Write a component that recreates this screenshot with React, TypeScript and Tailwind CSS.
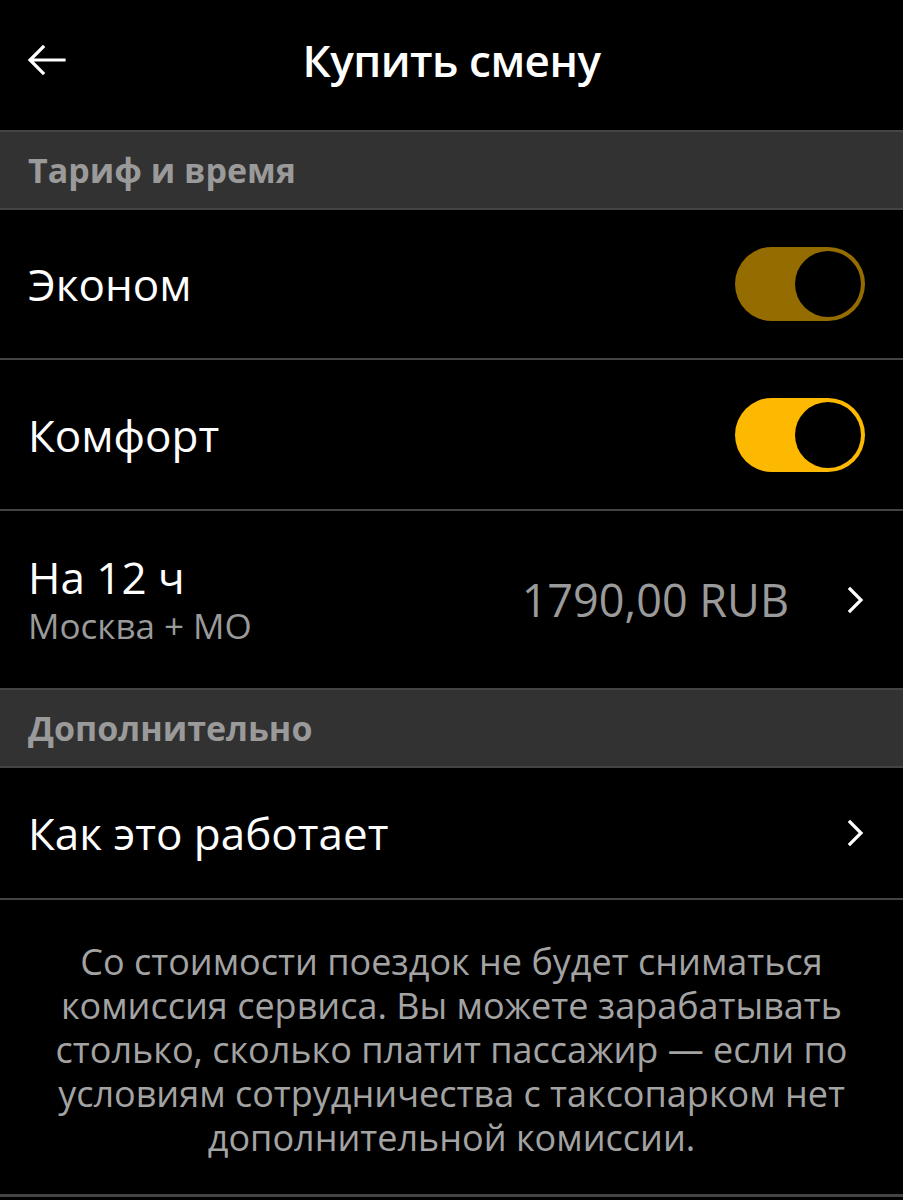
import React from 'react';

function Toggle({ dim }: { dim?: boolean }) {
  return (
    <div className={`flex h-[74px] w-[130px] items-center justify-end rounded-full p-[4px] ${dim ? 'bg-[#946c00]' : 'bg-[#fcb900]'}`}>
      <div className="h-[66px] w-[66px] rounded-full bg-black" />
    </div>
  );
}

function Chevron() {
  return (
    <svg width="20" height="28" viewBox="0 0 20 28" fill="none" className="shrink-0">
      <path d="M5 3 L16 14 L5 25" stroke="#fff" strokeWidth="3.2" strokeLinecap="square" />
    </svg>
  );
}

function SectionHeader({ label }: { label: string }) {
  return (
    <div className="flex h-[78px] items-center border-b-2 border-[#444] bg-[#323232] px-[28px]">
      <span className="text-[34px] font-bold text-[#9a9a9a]">{label}</span>
    </div>
  );
}

export default function App() {
  return (
    <div className="h-[1200px] w-[903px] overflow-hidden bg-black text-white" style={{ fontFamily: '"Open Sans", Roboto, sans-serif' }}>
      {/* Header */}
      <div className="relative flex h-[132px] items-center justify-center border-b-2 border-[#444]">
        <svg className="absolute left-[26px] top-[44px]" width="40" height="32" viewBox="0 0 40 32" fill="none">
          <path d="M38 16 H5 M17 3 L4 16 L17 29" stroke="#fff" strokeWidth="3.2" strokeLinecap="square" />
        </svg>
        <h1 className="-mt-[10px] text-[44px] font-semibold tracking-[-0.5px]">Купить смену</h1>
      </div>

      <SectionHeader label="Тариф и время" />

      {/* Эконом */}
      <div className="flex h-[150px] items-center justify-between border-b-2 border-[#444] pl-[28px] pr-[38px]">
        <span className="text-[44px]">Эконом</span>
        <Toggle dim />
      </div>

      {/* Комфорт */}
      <div className="flex h-[151px] items-center justify-between border-b-2 border-[#444] pl-[28px] pr-[38px]">
        <span className="text-[44px]">Комфорт</span>
        <Toggle />
      </div>

      {/* Shift */}
      <div className="flex h-[179px] items-center justify-between border-b-2 border-[#444] pl-[28px] pr-[38px]">
        <div className="flex flex-col">
          <span className="text-[44px] leading-[52px]">На 12 ч</span>
          <span className="text-[35px] leading-[46px] text-[#9a9a9a]">Москва + МО</span>
        </div>
        <div className="flex items-center gap-[56px]">
          <span className="text-[45px] text-[#9a9a9a]">1790,00 RUB</span>
          <Chevron />
        </div>
      </div>

      <SectionHeader label="Дополнительно" />

      {/* How it works */}
      <div className="flex h-[132px] items-center justify-between border-b-2 border-[#444] pl-[28px] pr-[38px]">
        <span className="text-[44px]">Как это работает</span>
        <Chevron />
      </div>

      {/* Description */}
      <div className="flex h-[297px] items-center justify-center border-b-[3px] border-[#444] px-[36px]">
        <p className="pt-[6px] text-center text-[36px] leading-[44px] text-[#a3a3a3]">
          Со стоимости поездок не будет сниматься комиссия сервиса. Вы можете зарабатывать столько, сколько платит пассажир — если по условиям сотрудничества с таксопарком нет дополнительной комиссии.
        </p>
      </div>
    </div>
  );
}
